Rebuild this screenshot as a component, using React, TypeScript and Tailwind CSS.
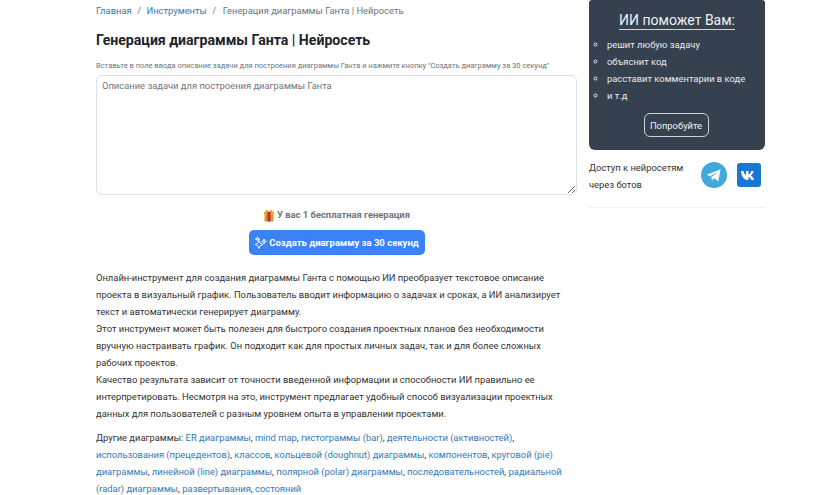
const linkCls = "text-[#337ab7]";

const others = [
  "ER диаграммы",
  "mind map",
  "гистограммы (bar)",
  "деятельности (активностей)",
  "использования (прецедентов)",
  "классов",
  "кольцевой (doughnut) диаграммы",
  "компонентов",
  "круговой (pie) диаграммы",
  "линейной (line) диаграммы",
  "полярной (polar) диаграммы",
  "последовательностей",
  "радиальной (radar) диаграммы",
  "развертывания",
  "состояний",
];

const GiftIcon = () => (
  <svg width="12" height="13" viewBox="0 0 12 13" className="shrink-0">
    <path d="M3 3C1 1 4 0 6 3C8 0 11 1 9 3Z" fill="#d9a520" />
    <rect x="1" y="3" width="10" height="2.5" fill="#f0a030" />
    <rect x="1.5" y="5.5" width="9" height="7" fill="#e8912a" />
    <rect x="4.5" y="3" width="3" height="9.5" fill="#b8332a" />
  </svg>
);

const SparkleCluster = () => (
  <svg width="13" height="13" viewBox="0 0 13 13" fill="none" stroke="#fff" strokeWidth="0.9" className="shrink-0">
    <path d="M5 4.5L6.2 7.3L9 8.5L6.2 9.7L5 12.5L3.8 9.7L1 8.5L3.8 7.3Z" />
    <path d="M10 3L10.6 4.9L12.5 5.5L10.6 6.1L10 8L9.4 6.1L7.5 5.5L9.4 4.9Z" />
    <path d="M3.5 .8L4 2.5L5.7 3L4 3.5L3.5 5.2L3 3.5L1.3 3L3 2.5Z" />
  </svg>
);

const TelegramIcon = () => (
  <svg width="26" height="26" viewBox="0 0 26 26">
    <circle cx="13" cy="13" r="13" fill="#3fa9dc" />
    <path d="M5.5 12.8L19.6 7.3L17.3 19.2L13.4 16.3L11.2 18.4L10.7 14.9L17 9.6L9.2 14.2Z" fill="#fff" />
    <path d="M9.2 14.2L10.7 14.9L11.2 18.4Z" fill="#c8e3f2" />
  </svg>
);

const VkIcon = () => (
  <svg width="24" height="24" viewBox="0 0 24 24">
    <rect width="24" height="24" rx="3" fill="#1976d2" />
    <path
      d="M4 8h2.6c.3 2.2 1.4 3.9 2.5 4.3V8h2.4v3.6c1.1-.2 2.2-1.6 2.7-3.6h2.4c-.4 2.2-1.7 3.8-2.8 4.6 1.2.7 2.6 2.1 3.3 4.4h-2.6c-.6-1.7-1.9-2.9-3-3.1V17h-.4C7.4 17 4.3 13.7 4 8Z"
      fill="#fff"
    />
  </svg>
);

export default function App() {
  return (
    <div className="h-[495px] overflow-hidden bg-white font-['Roboto',sans-serif] text-[9.4px] leading-[17px] text-[#333]">
      <div className="ml-[96px] flex w-[669px] gap-3">
        <main className="w-[481px] shrink-0">
          <nav className="flex h-[20px] items-center text-[#6c757d]">
            <a className={linkCls}>Главная</a>
            <span className="mx-[5.5px]">/</span>
            <a className={linkCls}>Инструменты</a>
            <span className="mx-[5.5px]">/</span>
            <span className="ml-[1px]">Генерация диаграммы Ганта | Нейросеть</span>
          </nav>
          <h1 className="mt-[10px] text-[14.1px] leading-[20px] font-bold text-[#212529]">
            Генерация диаграммы Ганта | Нейросеть
          </h1>
          <p className="mt-[10px] text-[7.5px] leading-[12px] whitespace-nowrap text-[#6c757d]">
            Вставьте в поле ввода описание задачи для построения диаграммы Ганта и нажмите кнопку "Создать диаграмму за 30 секунд"
          </p>
          <textarea
            className="mt-[3px] block h-[120px] w-[481px] rounded-[6px] border border-[#dee2e6] px-[5px] py-[1px] text-[9.4px] leading-[17px] outline-none placeholder:text-[#757575]"
            placeholder="Описание задачи для построения диаграммы Ганта"
          />
          <div className="mt-[12px] flex items-center justify-center gap-[2px] text-[9.4px] leading-[16px] font-bold text-[#6c757d]">
            <GiftIcon />
            <span>У вас 1 бесплатная генерация</span>
          </div>
          <div className="mt-[7px] flex justify-center">
            <button className="flex h-[25px] w-[176px] items-center justify-center gap-[2px] rounded-[5px] bg-[#3b82f6] text-[9.5px] font-bold whitespace-nowrap text-white">
              <SparkleCluster />
              Создать диаграмму за 30 секунд
            </button>
          </div>
          <div className="mt-[14px]">
            <p>
              Онлайн-инструмент для создания диаграммы Ганта с помощью ИИ преобразует текстовое описание проекта в визуальный график. Пользователь вводит информацию о задачах и сроках, а ИИ анализирует текст и автоматически генерирует диаграмму.
            </p>
            <p>
              Этот инструмент может быть полезен для быстрого создания проектных планов без необходимости вручную настраивать график. Он подходит как для простых личных задач, так и для более сложных рабочих проектов.
            </p>
            <p>
              Качество результата зависит от точности введенной информации и способности ИИ правильно ее интерпретировать. Несмотря на это, инструмент предлагает удобный способ визуализации проектных данных для пользователей с разным уровнем опыта в управлении проектами.
            </p>
          </div>
          <p className="mt-[7px]">
            Другие диаграммы:{" "}
            {others.map((name, i) => (
              <span key={name}>
                <a className={linkCls}>{name}</a>
                {i < others.length - 1 ? ", " : ""}
              </span>
            ))}
          </p>
        </main>
        <aside className="w-[176px] shrink-0">
          <div className="flex h-[150px] flex-col items-center rounded-[3px] rounded-b-[6px] bg-[#36414f] text-[#eef0f2]">
            <h2 className="mt-[11px] border-b border-[#d0d4d8] text-[14px] leading-[18px]">ИИ поможет Вам:</h2>
            <ul className="mt-[6px] w-full list-[circle] pl-[18px] text-[#e8eaec]">
              <li>решит любую задачу</li>
              <li>объяснит код</li>
              <li>расставит комментарии в коде</li>
              <li>и т.д</li>
            </ul>
            <button className="mt-[9px] mr-[2px] h-[24px] w-[65px] rounded-[6px] border border-[#ccd0d4] text-[9.4px]">Попробуйте</button>
          </div>
          <div className="mt-[9px] flex items-center justify-between border-b border-[#f1f1f1] pb-[14px]">
            <p>Доступ к нейросетям<br />через ботов</p>
            <div className="mb-[3px] flex items-center gap-[10px] pr-[4px]">
              <TelegramIcon />
              <VkIcon />
            </div>
          </div>
        </aside>
      </div>
    </div>
  );
}
